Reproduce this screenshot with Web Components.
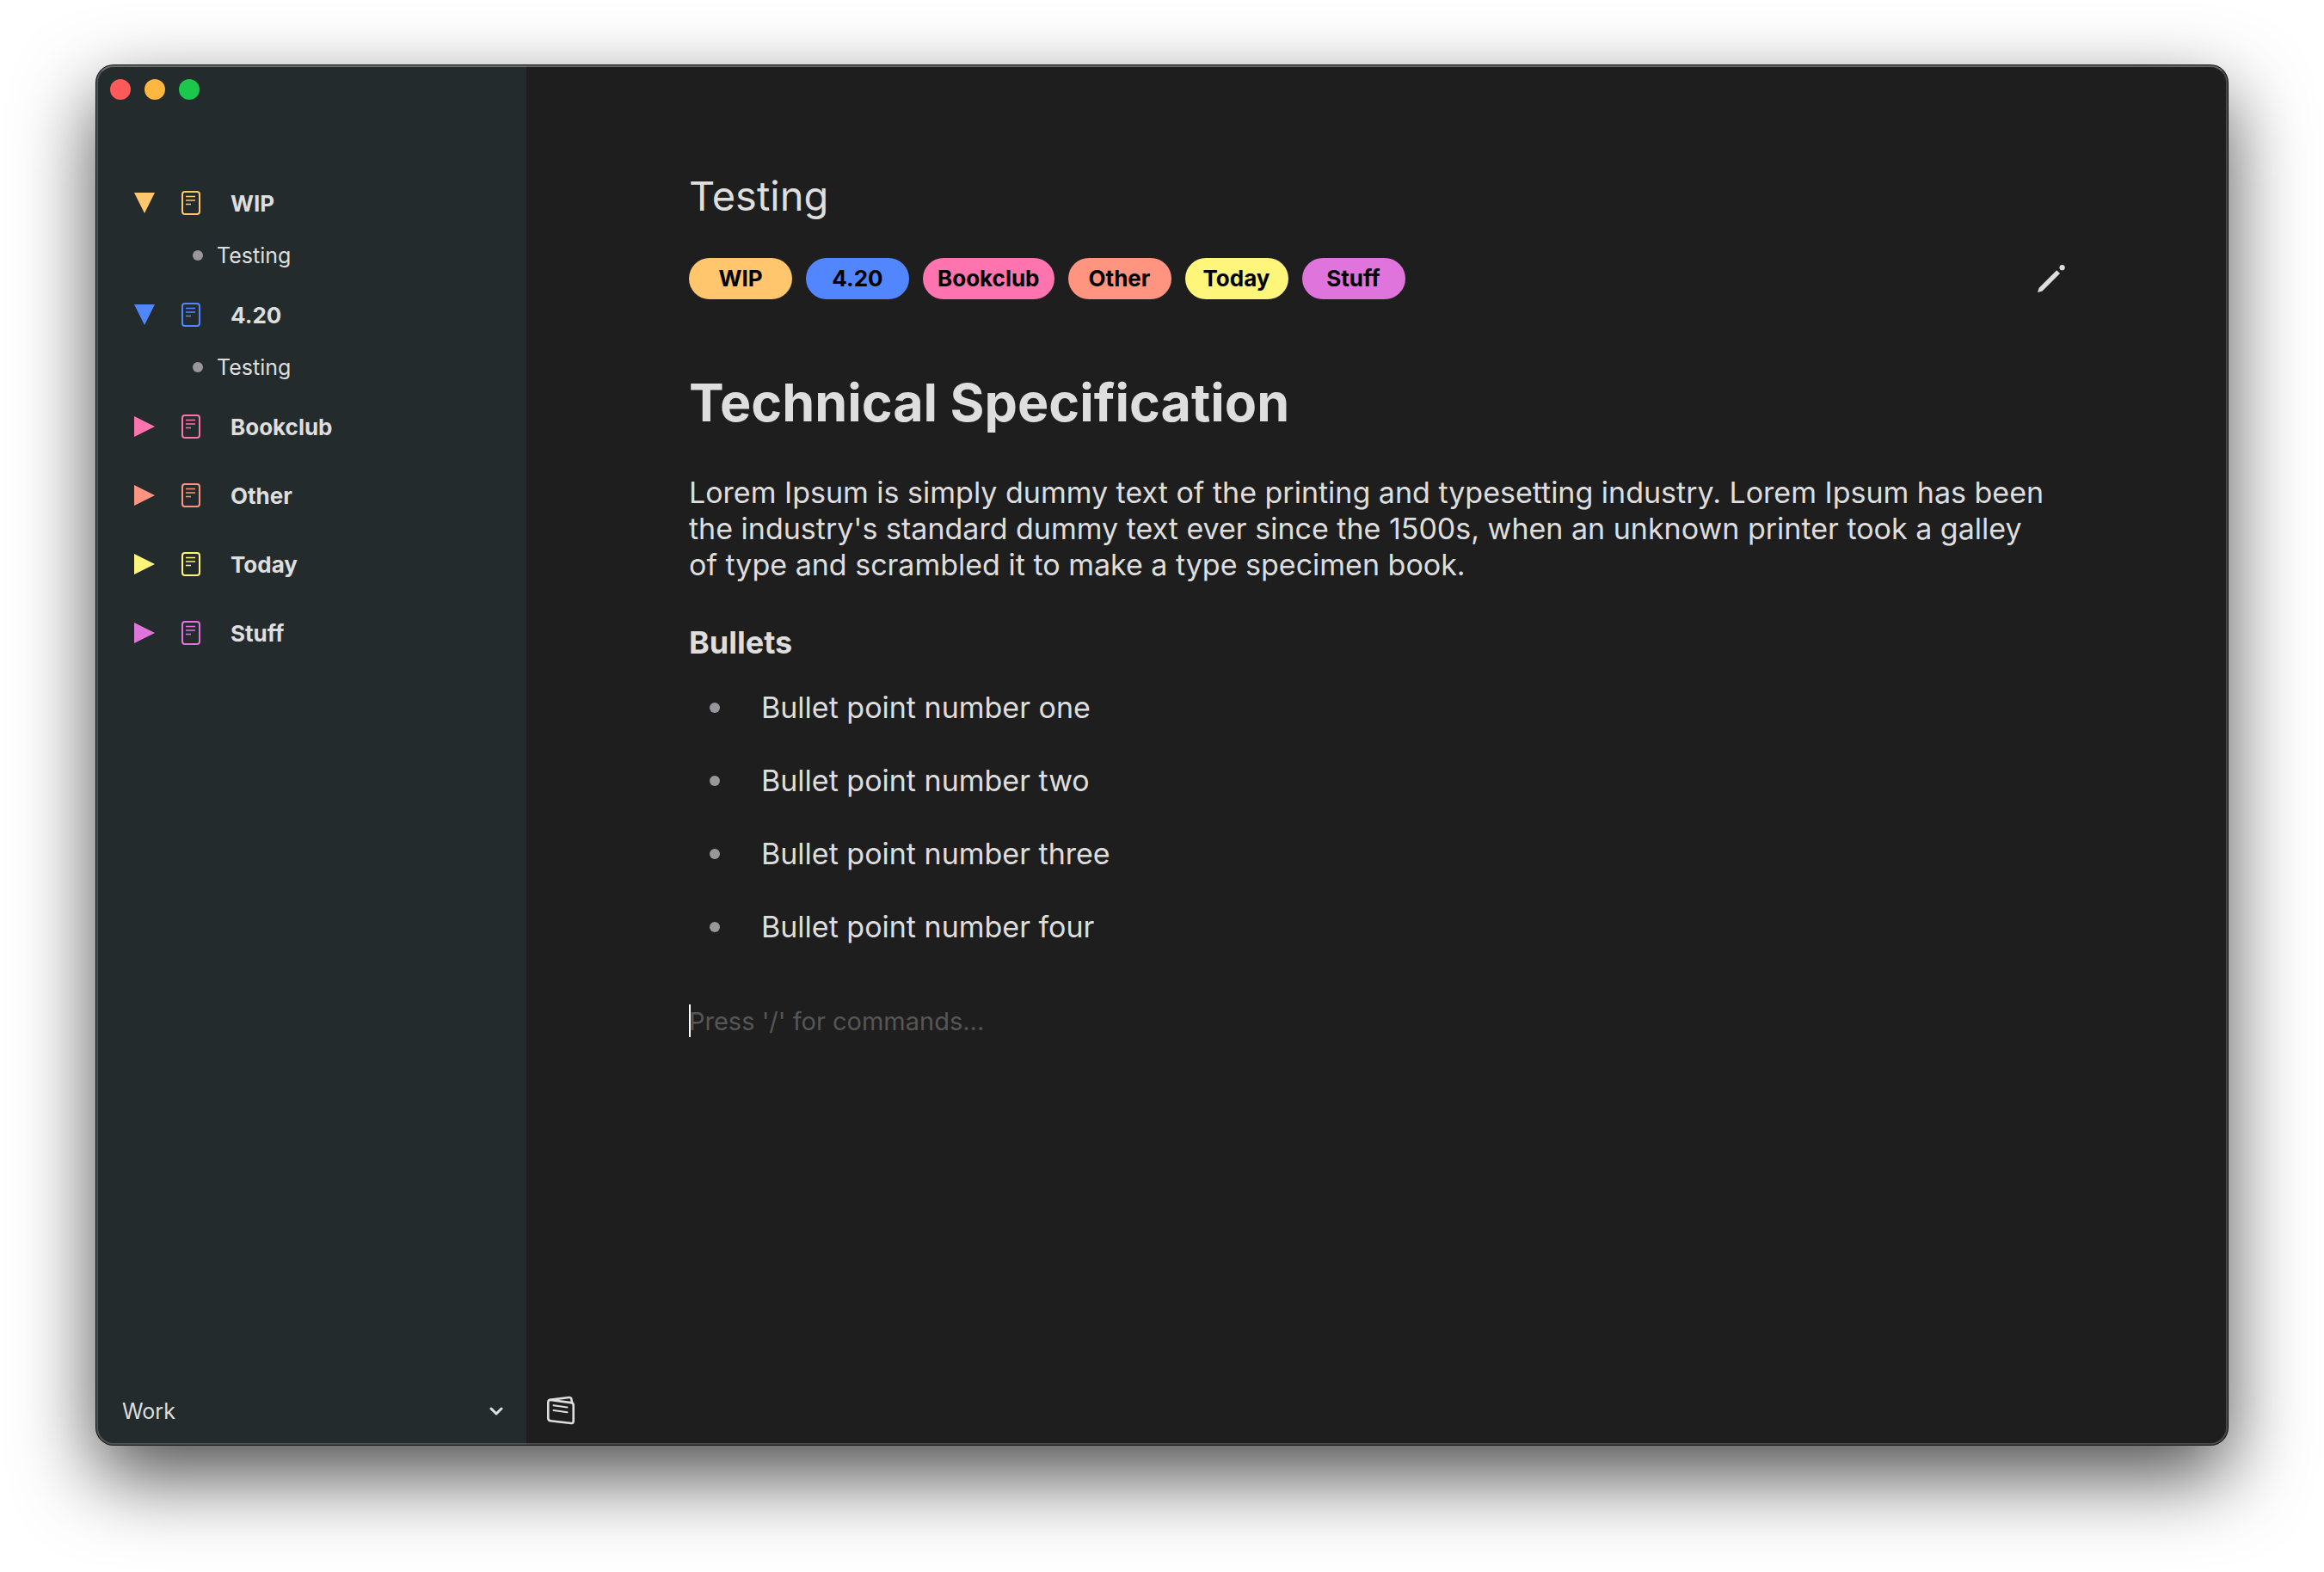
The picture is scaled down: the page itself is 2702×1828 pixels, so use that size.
<!DOCTYPE html>
<html lang="en">
<head>
<meta charset="utf-8">
<title>Testing</title>
<style>
  body {
    margin: 0;
    background: #fff;
    color: #dedede;
    font-family: Inter, "Liberation Sans", sans-serif;
    font-size: 34px;
  }
</style>
</head>
<body>
<app-window>
  <side-bar slot="sidebar">
    <tag-group label="WIP" color="#ffc66d" open><note-link>Testing</note-link></tag-group>
    <tag-group label="4.20" color="#5286ff" open><note-link>Testing</note-link></tag-group>
    <tag-group label="Bookclub" color="#ff74ae"></tag-group>
    <tag-group label="Other" color="#ff9580"></tag-group>
    <tag-group label="Today" color="#fdf67b"></tag-group>
    <tag-group label="Stuff" color="#e074dd"></tag-group>
    <space-picker slot="footer"></space-picker>
  </side-bar>
  <note-view>
    <span slot="title">Testing</span>
    <tag-pill slot="tags" color="#ffc66d">WIP</tag-pill>
    <tag-pill slot="tags" color="#5286ff">4.20</tag-pill>
    <tag-pill slot="tags" color="#ff74ae">Bookclub</tag-pill>
    <tag-pill slot="tags" color="#ff9580">Other</tag-pill>
    <tag-pill slot="tags" color="#fdf67b">Today</tag-pill>
    <tag-pill slot="tags" color="#e074dd">Stuff</tag-pill>
    <note-body></note-body>
  </note-view>
</app-window>

<script>
class BaseElement extends HTMLElement {
  connectedCallback() {
    if (this.shadowRoot) return;
    this.attachShadow({ mode: "open" }).innerHTML =
      "<style>* { box-sizing: border-box; } button { border: 0; padding: 0; background: none; color: inherit; font: inherit; cursor: pointer; } svg { display: block; flex: none; }</style>" +
      this.template();
  }
}

customElements.define("app-window", class extends BaseElement {
  template() {
    return `
      <style>
        :host { display: block; box-sizing: border-box; height: 100vh; padding: 76px 112px 148px; overflow: hidden; }
        .window {
          position: relative; display: flex; height: 100%; border-radius: 20px; background: #1e1e1e;
          box-shadow: 0 0 0 1px #0a0a0a, 0 36px 92px rgba(0, 0, 0, .7);
        }
        .edge {
          position: absolute; inset: 0; border-radius: 20px; pointer-events: none;
          border: 2px solid rgba(255, 255, 255, .2); border-top-color: rgba(255, 255, 255, .32);
        }
        ::slotted(note-view) { flex: 1; min-width: 0; }
      </style>
      <div class="window"><slot name="sidebar"></slot><slot></slot><div class="edge"></div></div>`;
  }
});

customElements.define("side-bar", class extends BaseElement {
  template() {
    return `
      <style>
        :host { display: flex; flex-direction: column; width: 500px; background: #242b2d; border-radius: 20px 0 0 20px; }
        .lights { display: flex; gap: 16px; padding: 16px; }
        .lights button { width: 24px; height: 24px; border-radius: 50%; }
        .close { background: #ff5a5a; }
        .minimize { background: #ffb73f; }
        .zoom { background: #1ac84b; }
        nav { flex: 1; display: flex; flex-direction: column; gap: 8px; padding-top: 68px; }
      </style>
      <div class="lights">
        <button class="close" aria-label="Close"></button>
        <button class="minimize" aria-label="Minimize"></button>
        <button class="zoom" aria-label="Zoom"></button>
      </div>
      <nav><slot></slot></nav>
      <slot name="footer"></slot>`;
  }
});

customElements.define("tag-group", class extends BaseElement {
  template() {
    const open = this.hasAttribute("open");
    return `
      <style>
        :host { display: block; }
        button { display: flex; align-items: center; width: 100%; height: 72px; padding-left: 44px; font-size: 26px; font-weight: 700; text-align: left; }
        .arrow { margin-right: 31px; fill: ${this.getAttribute("color")}; }
        .note { margin-right: 35px; fill: none; stroke: ${this.getAttribute("color")}; }
      </style>
      <button aria-expanded="${open}">
        <svg class="arrow" width="24" height="24" viewBox="0 0 24 24"><path d="${open ? "M0 0H24L12 24Z" : "M0 0L24 12L0 24Z"}"/></svg>
        <svg class="note" width="22" height="28" viewBox="0 0 22 28">
          <rect x="1" y="1" width="20" height="26" rx="3" stroke-width="2"/>
          <path d="M5 6.5H16M5 11H16M5 15.5H11" stroke-width="1.5"/>
        </svg>
        <span>${this.getAttribute("label")}</span>
      </button>
      <slot></slot>`;
  }
});

customElements.define("note-link", class extends BaseElement {
  template() {
    return `
      <style>
        :host { display: block; }
        a { display: flex; align-items: center; gap: 16px; height: 50px; padding-left: 112px; color: inherit; font-size: 25px; text-decoration: none; }
        a::before { content: ""; width: 12px; height: 12px; border-radius: 50%; background: #98979b; }
      </style>
      <a href="#"><slot></slot></a>`;
  }
});

customElements.define("space-picker", class extends BaseElement {
  template() {
    return `
      <style>
        :host { display: grid; align-items: center; height: 78px; padding: 0 27px 0 30px; }
        select, svg { grid-area: 1 / 1; }
        select { appearance: none; width: 100%; border: 0; padding: 0; outline: 0; background: none; color: inherit; font: inherit; font-size: 25px; }
        svg { justify-self: end; pointer-events: none; }
      </style>
      <select aria-label="Space"><option>Work</option></select>
      <svg width="16" height="10" viewBox="0 0 16 10" fill="none" stroke="#dedede" stroke-width="3" stroke-linecap="round" stroke-linejoin="round"><path d="M2 2L8 8L14 2"/></svg>`;
  }
});

customElements.define("tag-pill", class extends BaseElement {
  template() {
    return `
      <style>
        :host { display: block; }
        span { display: block; min-width: 120px; padding: 0 17px; border-radius: 24px; background: ${this.getAttribute("color")}; color: #000; font-size: 26px; font-weight: 700; line-height: 48px; text-align: center; }
      </style>
      <span><slot></slot></span>`;
  }
});

customElements.define("note-view", class extends BaseElement {
  template() {
    return `
      <style>
        :host { display: flex; flex-direction: column; }
        main { flex: 1; min-height: 0; padding: 120px 188px 0 189px; }
        h1 { margin: 0 0 40px; font-size: 47px; font-weight: 400; line-height: 64px; }
        .meta { display: flex; justify-content: space-between; align-items: center; margin-bottom: 80px; }
        .tags { display: flex; gap: 16px; }
        footer { display: flex; align-items: center; height: 80px; padding-left: 24px; }
      </style>
      <main>
        <h1><slot name="title"></slot></h1>
        <div class="meta">
          <div class="tags"><slot name="tags"></slot></div>
          <button aria-label="Edit tags">
            <svg width="34" height="34" viewBox="0 0 34 34" fill="#dedede">
              <path d="M1 33L2.7 27.7L23.2 7.2L27 11L6.5 31.4Z"/><circle cx="29.6" cy="4.2" r="3.1"/>
            </svg>
          </button>
        </div>
        <slot></slot>
      </main>
      <footer>
        <button aria-label="Notes">
          <svg width="32" height="34" viewBox="0 0 32 34" fill="none" stroke="#dedede" stroke-width="2.6" stroke-linejoin="round" stroke-linecap="round">
            <path d="M4 5L28 8.1Q30.7 8.5 30.7 11V29.5Q30.7 32.3 28 32L4 29.2Q1.3 28.9 1.3 26V7.5Q1.3 4.7 4 5Z"/>
            <path d="M3 4.9L25.5 2Q28.2 1.8 28.5 4.4L29 8"/>
            <path d="M7.5 11.2L23.5 13.4M7.5 17L23.5 19.2" stroke-width="2"/>
          </svg>
        </button>
      </footer>`;
  }
});

customElements.define("note-body", class extends BaseElement {
  template() {
    return `
      <style>
        :host { display: block; padding-right: 23px; line-height: 42px; }
        h2 { margin: 0 0 44px; font-size: 61px; font-weight: 700; line-height: 80px; }
        p { margin: 0 0 48px; }
        h3 { margin: 0 0 34px; font-size: 36px; font-weight: 700; }
        ul { display: flex; flex-direction: column; gap: 43px; margin: 0 0 69px; padding: 0 0 0 24px; list-style: none; }
        li { display: flex; align-items: center; gap: 48px; }
        li::before { content: ""; width: 12px; height: 12px; border-radius: 50%; background: #98979b; }
        .prompt { position: relative; height: 38px; }
        .prompt::before { content: ""; position: absolute; left: 0; top: 0; width: 2px; height: 100%; background: #fff; }
        input { display: block; width: 100%; height: 100%; border: 0; padding: 0; outline: 0; background: none; color: inherit; font: inherit; font-size: 29px; }
        input::placeholder { color: #565656; opacity: 1; }
      </style>
      <h2>Technical Specification</h2>
      <p>Lorem Ipsum is simply dummy text of the printing and typesetting industry. Lorem Ipsum has been the industry's standard dummy text ever since the 1500s, when an unknown printer took a galley of type and scrambled it to make a type specimen book.</p>
      <h3>Bullets</h3>
      <ul>
        <li>Bullet point number one</li>
        <li>Bullet point number two</li>
        <li>Bullet point number three</li>
        <li>Bullet point number four</li>
      </ul>
      <div class="prompt"><input type="text" aria-label="New block" placeholder="Press '/' for commands..."></div>`;
  }
});
</script>
</body>
</html>
